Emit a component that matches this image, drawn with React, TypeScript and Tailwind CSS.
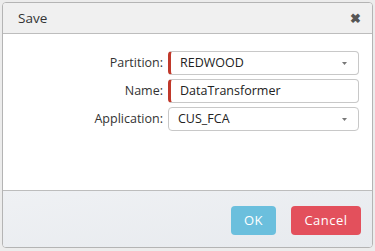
import React from "react";

function Row({ label, value, required, select }: { label: string; value: string; required?: boolean; select?: boolean }) {
  return (
    <div className="flex items-center h-[24px]">
      <div className="w-[164px] pr-[4px] text-right text-[12.5px] text-[#333]">{label}</div>
      <div
        className={
          "relative ml-[1px] w-[191px] h-[24px] rounded-[4px] border border-[#c8c8c8] bg-white flex items-center pl-[9px] text-[12.5px] text-[#222] overflow-hidden " +
          (required ? "border-l-[3px] border-l-[#c0392b] pl-[7px]" : "")
        }
      >
        <span>{value}</span>
        {select && (
          <svg className="absolute right-[11px] top-[10px]" width="5" height="3" viewBox="0 0 5 3">
            <path d="M0 0H5L2.5 3Z" fill="#777" />
          </svg>
        )}
      </div>
    </div>
  );
}

export default function App() {
  return (
    <div
      className="w-[375px] h-[251px] bg-[#ececec] pt-[2px] pl-[2px] overflow-hidden"
      style={{ fontFamily: '"Open Sans", "Noto Sans", sans-serif' }}
    >
      <div className="w-[371px] h-[246px] border border-[#b4b4b4] rounded-[4px] bg-white flex flex-col overflow-hidden">
        <div className="h-[31px] shrink-0 bg-[#f0f0f0] border-b border-[#bdbdbd] flex items-center justify-between pl-[15px] pr-[11px]">
          <span className="text-[13.5px] text-[#333]">Save</span>
          <span className="text-[13px] text-[#555] leading-none font-bold">✖</span>
        </div>
        <div className="flex-1 bg-white pt-[17px] flex flex-col gap-[4px]">
          <Row label="Partition:" value="REDWOOD" required select />
          <Row label="Name:" value="DataTransformer" required />
          <Row label="Application:" value="CUS_FCA" select />
        </div>
        <div className="h-[57px] shrink-0 border-t border-[#bdbdbd] bg-gradient-to-br from-[#eff1f4] to-[#e7eaee] flex items-start justify-end pt-[15px] pr-[11px] gap-[15px]">
          <button className="w-[45px] h-[29px] rounded-[4px] bg-[#6bbfdd] text-white text-[13px] tracking-[0.5px]">OK</button>
          <button className="w-[70px] h-[29px] rounded-[4px] bg-[#e3505c] text-white text-[13px] tracking-[0.5px]">Cancel</button>
        </div>
      </div>
    </div>
  );
}
